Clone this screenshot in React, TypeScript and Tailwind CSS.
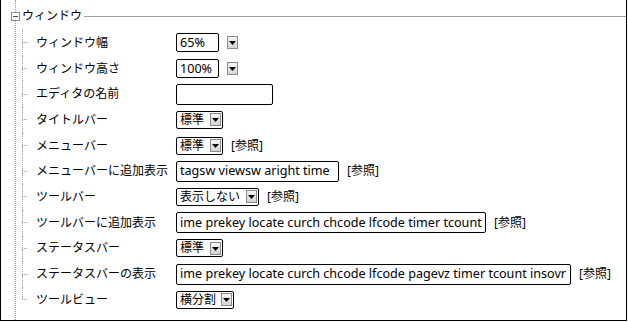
import React from 'react';

type Row = {
    label: string;
    kind: 'combo' | 'select' | 'text';
    value: string;
    width: number;
    ref?: boolean;
};

const rows: Row[] = [
    { label: 'ウィンドウ幅', kind: 'combo', value: '65%', width: 43 },
    { label: 'ウィンドウ高さ', kind: 'combo', value: '100%', width: 43 },
    { label: 'エディタの名前', kind: 'text', value: '', width: 97 },
    { label: 'タイトルバー', kind: 'select', value: '標準', width: 47 },
    { label: 'メニューバー', kind: 'select', value: '標準', width: 47, ref: true },
    { label: 'メニューバーに追加表示', kind: 'text', value: 'tagsw viewsw aright time', width: 163, ref: true },
    { label: 'ツールバー', kind: 'select', value: '表示しない', width: 83, ref: true },
    { label: 'ツールバーに追加表示', kind: 'text', value: 'ime prekey locate curch chcode lfcode timer tcount', width: 310, ref: true },
    { label: 'ステータスバー', kind: 'select', value: '標準', width: 47 },
    { label: 'ステータスバーの表示', kind: 'text', value: 'ime prekey locate curch chcode lfcode pagevz timer tcount insovr', width: 395, ref: true },
    { label: 'ツールビュー', kind: 'select', value: '横分割', width: 58 },
];

const ArrowButton: React.FC = () => (
    <div className="w-[11px] h-[13px] border border-[#8a8a8a] bg-gradient-to-b from-[#f6f6f6] to-[#d4d4d4] flex items-center justify-center shrink-0">
        <svg width="7" height="4" viewBox="0 0 7 4" className="mt-[1px]">
            <polygon points="0,0 7,0 3.5,4" fill="#000" />
        </svg>
    </div>
);

const Control: React.FC<{ row: Row }> = ({ row }) => {
    if (row.kind === 'combo') {
        return (
            <>
                <div
                    className="h-[19px] border border-black rounded-[2px] px-[3px] flex items-center text-[12.6px]"
                    style={{ width: row.width }}
                >
                    {row.value}
                </div>
                <div className="ml-[8px]">
                    <ArrowButton />
                </div>
            </>
        );
    }
    if (row.kind === 'select') {
        return (
            <div
                className="h-[18px] border border-black rounded-[2px] pl-[3px] pr-[1px] flex items-center justify-between"
                style={{ width: row.width }}
            >
                <span>{row.value}</span>
                <ArrowButton />
            </div>
        );
    }
    return (
        <div
            className="h-[21px] border border-black rounded-[2px] px-[3px] flex items-center whitespace-nowrap overflow-hidden text-[12.6px]"
            style={{ width: row.width }}
        >
            {row.value}
        </div>
    );
};

const App: React.FC = () => {
    return (
        <div
            className="w-[627px] h-[321px] bg-white border-l border-r border-b border-black pl-[14px] text-[12px] leading-[14px] text-black overflow-hidden"
            style={{ fontFamily: '"Noto Sans", "Noto Sans CJK JP", sans-serif' }}
        >
            <div className="h-full border-l border-dotted border-[#a0a0a0]">
                <div className="h-[30px] pt-[2px] flex items-center">
                    <div className="-ml-[5px] w-[9px] h-[9px] border border-[#8c8c8c] bg-white flex items-center justify-center shrink-0">
                        <div className="w-[5px] h-px bg-[#3050a0]" />
                    </div>
                    <span className="ml-[2px]">ウィンドウ</span>
                    <div className="flex-1 ml-[2px] h-px bg-[#a0a0a0]" />
                </div>
                <div className="ml-[6px]">
                    {rows.map((row, i) => {
                        const last = i === rows.length - 1;
                        return (
                            <div key={i} className="h-[25.7px] flex items-center">
                                <div className="w-[5px] h-full flex flex-col shrink-0">
                                    <div className="flex-1 border-l border-dotted border-[#a0a0a0]" />
                                    <div className="h-0 border-t border-dotted border-[#a0a0a0]" />
                                    <div className={`flex-1 border-l border-dotted ${last ? 'border-transparent' : 'border-[#a0a0a0]'}`} />
                                </div>
                                <div className="w-[149px] pl-[9px] whitespace-nowrap shrink-0">{row.label}</div>
                                <div className="flex items-center">
                                    <Control row={row} />
                                    {row.ref && <span className="ml-[8px]">[参照]</span>}
                                </div>
                            </div>
                        );
                    })}
                </div>
            </div>
        </div>
    );
};

export default App;
